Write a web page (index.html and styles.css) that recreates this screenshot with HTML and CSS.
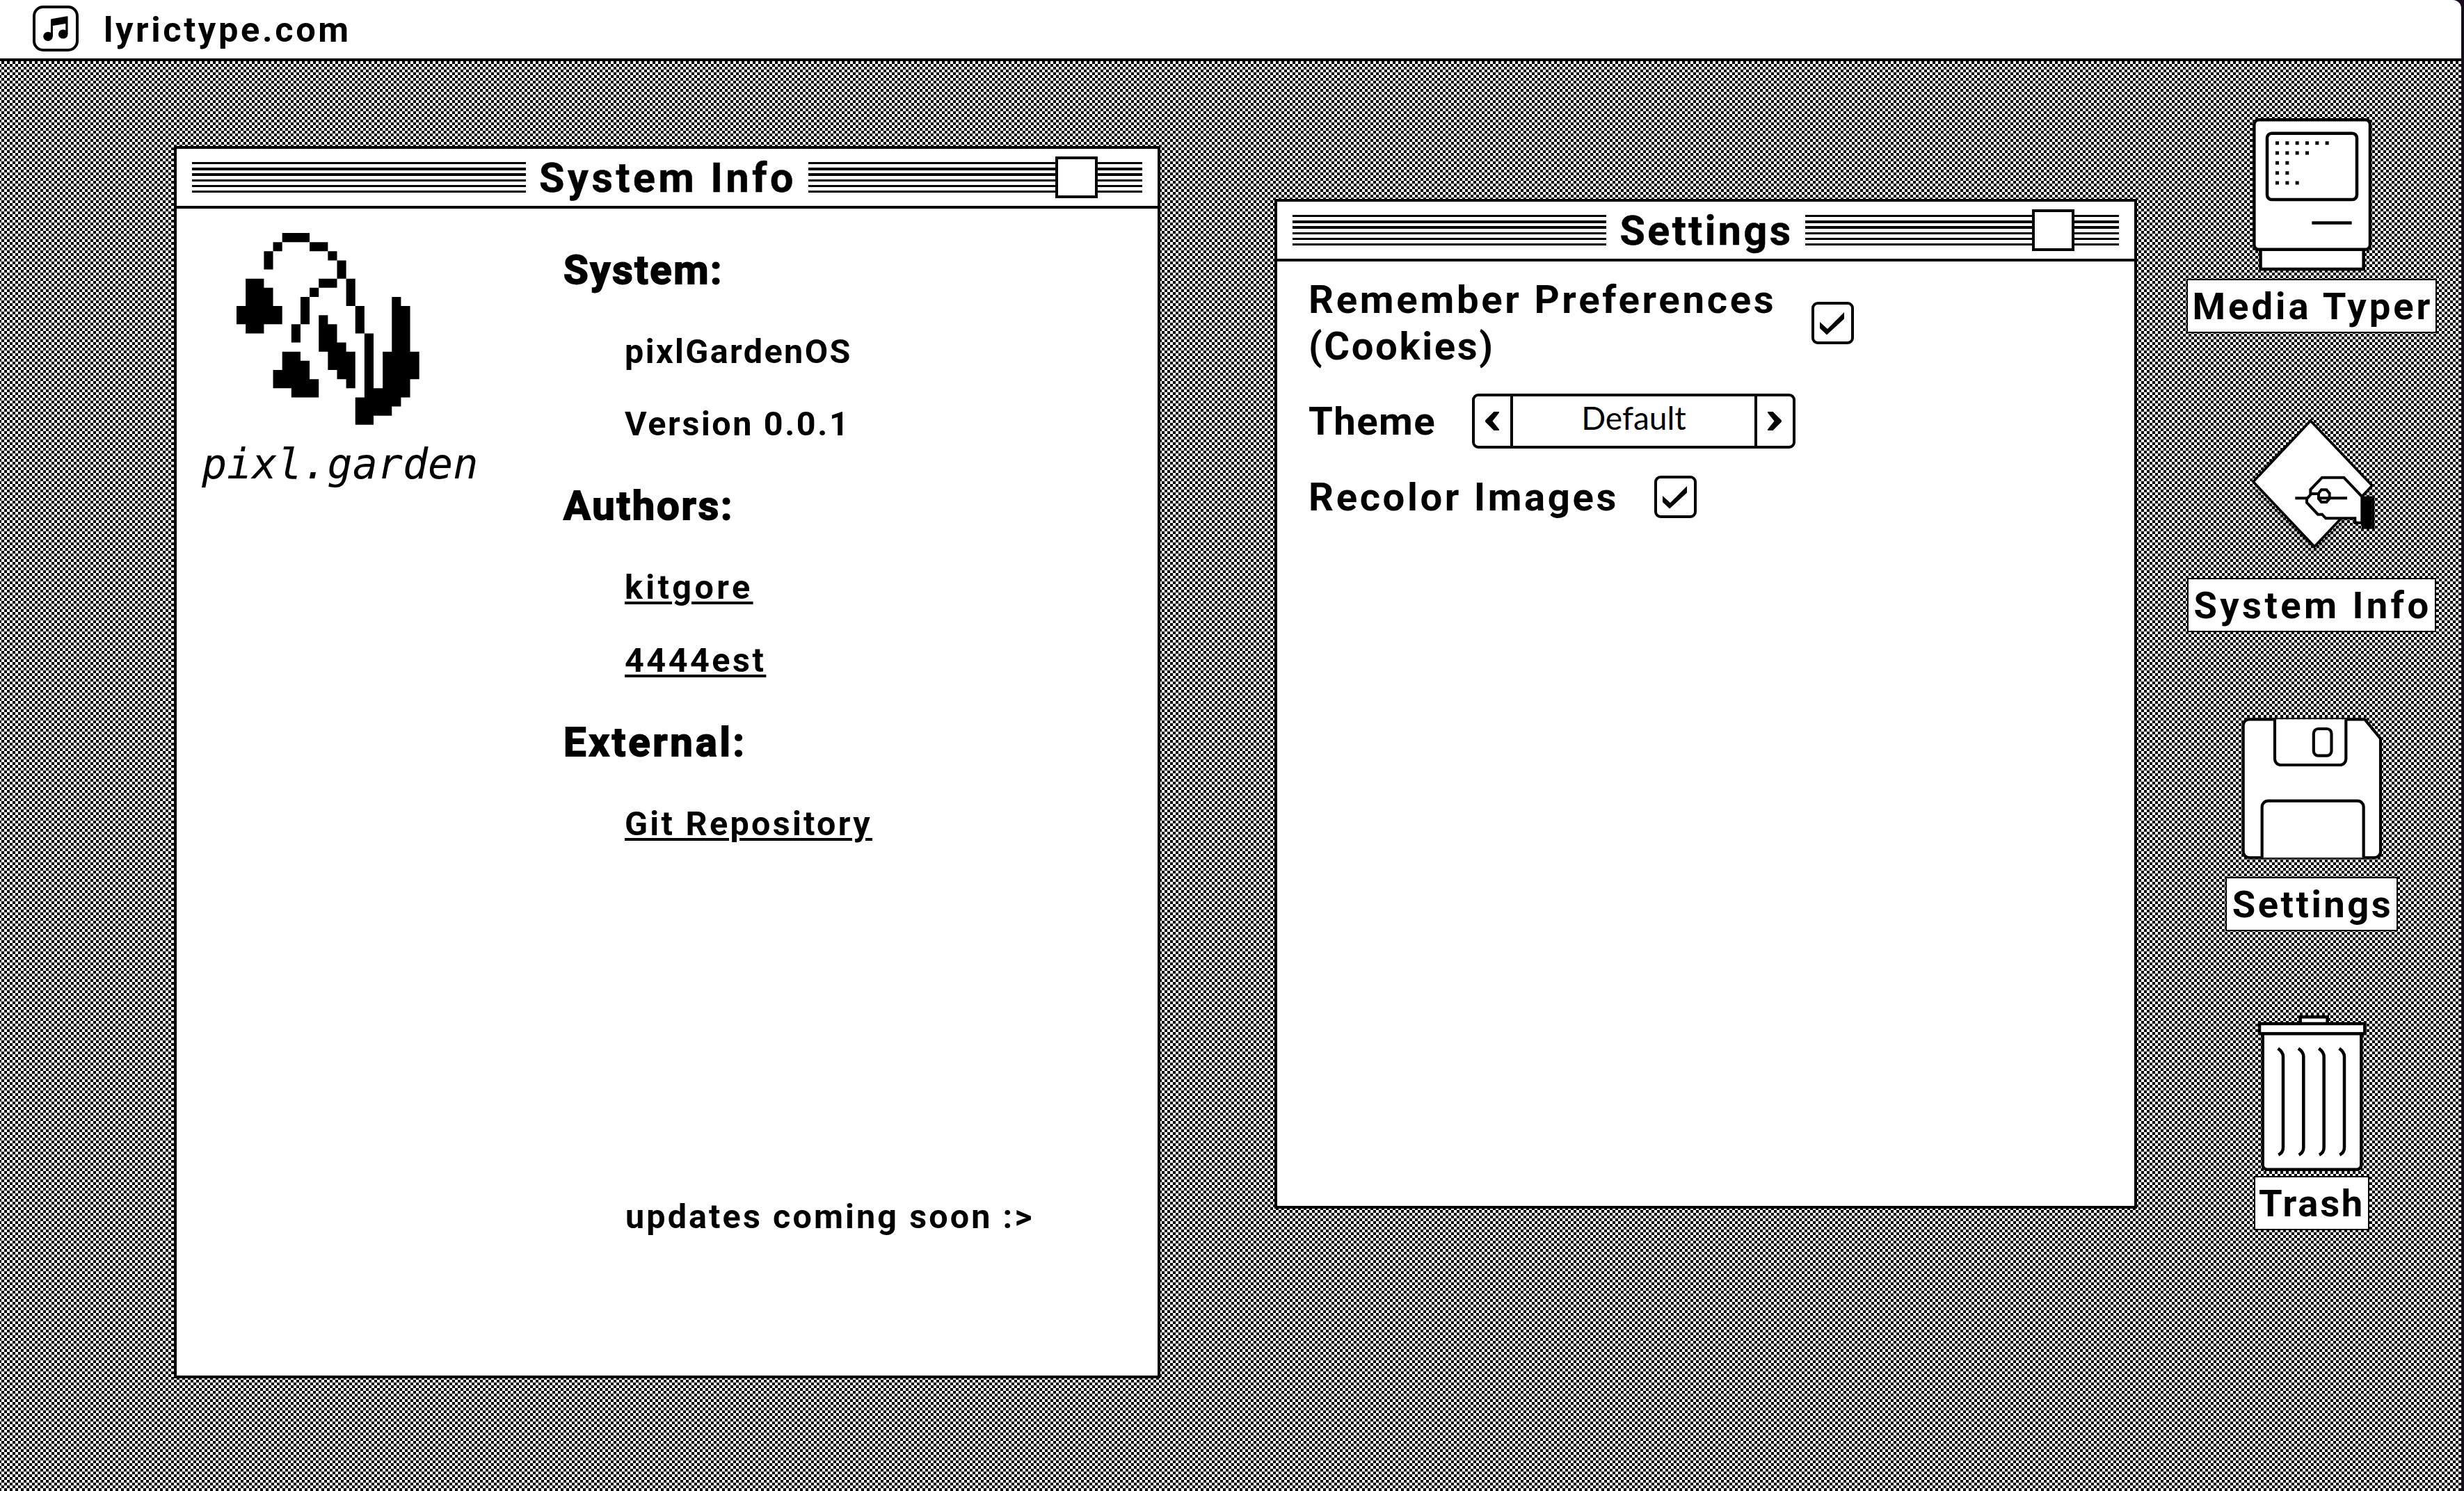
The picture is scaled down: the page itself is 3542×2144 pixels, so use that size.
FILE: index.html
```
<!DOCTYPE html>
<html lang="en">
<head>
<meta charset="utf-8">
<title>lyrictype.com</title>
<link rel="stylesheet" href="styles.css">
</head>
<body>
<div class="screen">
  <header class="menubar">
    <svg class="menubar-icon" viewBox="0 0 66 66">
      <rect x="2" y="2" width="62" height="62" rx="13" fill="none" stroke="#000" stroke-width="4"/>
      <path d="M26 20.500Q26 19.500 27 19.300L49.500 15.200Q50.500 15.200 50.500 16.200V41H47.300V26L29 29V44.500H26Z"/>
      <ellipse cx="22" cy="44.300" rx="6.800" ry="6.600"/>
      <ellipse cx="43.700" cy="41" rx="6.800" ry="6.600"/>
    </svg>
    <span class="menubar-title track-36">lyrictype.com</span>
  </header>

  <main class="desktop">
    <section class="window window-info">
      <div class="titlebar">
        <div class="stripes"></div>
        <h1 class="title track-46">System Info</h1>
        <div class="stripes"></div>
        <button class="close" aria-label="Close"></button>
      </div>
      <div class="info-body">
        <div class="brand">
          <svg class="flower" viewBox="0 0 20 21">
            <path d="M5 0h3v1h-3zM4 1h1v1h-1zM8 1h2v1h-2zM3 2h1v2h-1zM10 2h1v1h-1zM11 3h1v2h-1zM9 5h2v1h-2zM12 5h1v3h-1zM8 6h1v1h-1zM7 7h1v3h-1zM6 10h1v2h-1zM13 8h1v3h-1z"/>
            <path d="M1 5h2v1h1v2h1v2h-2v1h-2v-1h-1v-2h1z"/>
            <path d="M5 13h2v1h1v2h1v2h-3v-1h-2v-2h1z"/>
            <path d="M9 9h1v1h1v2h1v1h1v4h-1v-1h-1v-1h-1v-2h-1z"/>
            <path d="M14 11h1v6h1v-4h1v-6h1v1h1v5h1v3h-1v2h-1v1h-1v1h-2v1h-2v-3h1z"/>
          </svg>
          <div class="wordmark">pixl.garden</div>
        </div>
        <div class="details">
          <h2 class="track-25">System:</h2>
          <ul>
            <li class="track-24">pixlGardenOS</li>
            <li class="track-26">Version 0.0.1</li>
          </ul>
          <h2 class="track-27">Authors:</h2>
          <ul>
            <li><a class="track-44">kitgore</a></li>
            <li><a class="track-35">4444est</a></li>
          </ul>
          <h2 class="track-38">External:</h2>
          <ul>
            <li><a class="track-33">Git Repository</a></li>
          </ul>
          <p class="note track-31">updates coming soon :&gt;</p>
        </div>
      </div>
    </section>

    <section class="window window-settings">
      <div class="titlebar">
        <div class="stripes"></div>
        <h1 class="title track-35">Settings</h1>
        <div class="stripes"></div>
        <button class="close" aria-label="Close"></button>
      </div>
      <div class="settings-body">
        <div class="setting setting-cookies">
          <span class="label"><span class="track-37">Remember Preferences</span><br><span class="track-26">(Cookies)</span></span>
          <span class="checkbox"><svg viewBox="0 0 60 60"><path d="M12 29L23 39L47 15V24.500L22 47.500L12 38Z"/></svg></span>
        </div>
        <div class="setting setting-theme">
          <span class="label track-14">Theme</span>
          <div class="picker">
            <span class="arrow"><svg viewBox="0 0 20 27"><path d="M12.500 0H20V1.500L10.500 13.500L20 25.500V27H12.500L0 14.500V12.500Z"/></svg></span>
            <span class="value">Default</span>
            <span class="arrow"><svg viewBox="0 0 20 27"><path d="M7.500 0H0V1.500L9.500 13.500L0 25.500V27H7.500L20 14.500V12.500Z"/></svg></span>
          </div>
        </div>
        <div class="setting setting-recolor">
          <span class="label track-36">Recolor Images</span>
          <span class="checkbox"><svg viewBox="0 0 60 60"><path d="M12 29L23 39L47 15V24.500L22 47.500L12 38Z"/></svg></span>
        </div>
      </div>
    </section>

    <nav class="icons">
      <div class="icon">
        <svg viewBox="300 45 620 708">
          <g fill="#fff" stroke="#000" stroke-width="13.500">
            <rect x="388.500" y="610" width="444.500" height="101"/>
            <rect x="361" y="66.500" width="500" height="560" rx="20"/>
            <rect x="417" y="125" width="387" height="286" rx="20"/>
            <path d="M610 511.500H782"/>
          </g>
          <path d="M453 167H683M453 210H597M453 253H511M453 296H511M453 339H554" stroke="#000" stroke-width="15" stroke-dasharray="15 28"/>
        </svg>
        <span class="caption caption-media track-40">Media Typer</span>
      </div>
      <div class="icon">
        <svg viewBox="300 45 620 708">
          <path class="paper" d="M604 75L870 355L621 618L357 338Z" fill="#fff" stroke="#000" stroke-width="11"/>
          <path d="M538 409H600" stroke="#000" stroke-width="12"/>
          <path d="M604 392V372L654 320H748L826 402V515H796V496H670L654 479H636L588 428V412L608 390H640" fill="#fff" stroke="#000" stroke-width="12"/>
          <path d="M651 373H673L686 388V411L673 426H651L639 411V388ZM638 409H762" fill="none" stroke="#000" stroke-width="12"/>
          <rect x="824" y="401" width="56" height="141"/>
        </svg>
        <span class="caption caption-info track-44">System Info</span>
      </div>
      <div class="icon">
        <svg viewBox="300 45 620 708">
          <g fill="#fff" stroke="#000" stroke-width="12.500">
            <path d="M340 73H838L906 156V644A26 26 0 0 1 880 670H340A26 26 0 0 1 314 644V99A26 26 0 0 1 340 73Z"/>
            <path d="M450 73V244A26 26 0 0 0 476 270H731A26 26 0 0 0 757 244V73"/>
            <rect x="617.500" y="114" width="77" height="116" rx="20"/>
            <path d="M395 670V451A26 26 0 0 1 421 425H807A26 26 0 0 1 833 451V670"/>
          </g>
        </svg>
        <span class="caption caption-settings track-35">Settings</span>
      </div>
      <div class="icon">
        <svg viewBox="300 45 620 708">
          <g fill="#fff" stroke="#000" stroke-width="13.500">
            <rect x="560" y="67" width="117" height="30"/>
            <path d="M398 139V705A20 20 0 0 0 418 725.500H803A20 20 0 0 0 823 705V139"/>
            <rect x="384" y="96" width="454" height="43"/>
            <g fill="none">
              <path d="M464 203Q486 219 486 238V630Q486 652 466 662"/>
              <path d="M552 203Q574 219 574 238V630Q574 652 554 662"/>
              <path d="M640 203Q662 219 662 238V630Q662 652 642 662"/>
              <path d="M728 203Q750 219 750 238V630Q750 652 730 662"/>
            </g>
          </g>
        </svg>
        <span class="caption caption-trash track-27">Trash</span>
      </div>
    </nav>
  </main>
</div>
</body>
</html>
```
FILE: styles.css
```
* { box-sizing: border-box; margin: 0; padding: 0; }

body {
  width: 3542px;
  height: 2144px;
  overflow: hidden;
  background: #160a1c;
  color: #000;
  font-family: Roboto, "Liberation Sans", sans-serif;
  font-weight: 700;
}

svg { display: block; }

.screen {
  display: flex;
  flex-direction: column;
  width: 3538px;
  height: 2144px;
  border-top-right-radius: 12px;
  overflow: hidden;
}

/* Menu bar */
.menubar {
  display: flex;
  align-items: center;
  gap: 36px;
  height: 88px;
  padding: 0 47px 2px;
  border-bottom: 4px solid #000;
  background: #fff;
}
.menubar-icon { width: 66px; height: 66px; }
.menubar-title { padding-top: 3px; font-size: 50.6px; line-height: 60px; }

/* Dithered desktop */
.desktop {
  position: relative;
  flex: 1;
  background: conic-gradient(#fff 25%, #000 0 50%, #fff 0 75%, #000 0) 2px 0 / 8px 8px;
}

/* Windows */
.window {
  position: absolute;
  display: flex;
  flex-direction: column;
  border: 4px solid #000;
  background: #fff;
}
.window-info { left: 250px; top: 122px; width: 1418px; height: 1772px; }
.window-settings { left: 1832px; top: 198px; width: 1240px; height: 1452px; }

.titlebar {
  position: relative;
  display: flex;
  align-items: center;
  height: 86px;
  padding: 0 22px;
  border-bottom: 4px solid #000;
}
.title {
  padding: 2px 17px 0 19px;
  font-size: 59.1px;
  line-height: 70px;
  font-weight: 700;
  -webkit-text-stroke: .6px #000;
}
.stripes {
  flex: 1;
  height: 44.4px;
  background: repeating-linear-gradient(#000 0 3.4px, #fff 3.4px 8.2px);
}
.close {
  position: absolute;
  right: 86px;
  top: 11px;
  width: 61px;
  height: 60px;
  border: 4px solid #000;
  background: #fff;
}

/* System Info */
.info-body { display: flex; flex: 1; }
.brand { width: 556px; padding: 35px 0 0 36px; }
.flower { width: 262.7px; height: 275.8px; margin-left: 50px; }
.wordmark {
  margin-top: 26px;
  font: italic 400 60px/60px "DejaVu Sans Mono", monospace;
}
.details { padding-top: 57.500px; }
.details h2 {
  font-size: 58px;
  line-height: 60px;
  -webkit-text-stroke: 1.8px #000;
}
.details ul {
  display: flex;
  flex-direction: column;
  gap: 48.700px;
  padding: 60px 0 59px 88px;
  list-style: none;
}
.details li, .note { font-size: 48.5px; line-height: 56px; }
.details a {
  text-decoration: underline;
  text-decoration-thickness: 4px;
  text-underline-offset: 4px;
}
.note { padding: 450px 0 0 89px; }

/* Settings */
.settings-body { display: flex; flex-direction: column; gap: 34px; padding: 20px 45px; }
.setting { display: flex; align-items: center; gap: 51px; }
.setting-cookies { height: 136px; }
.setting-theme { height: 79px; gap: 52px; }
.setting-recolor { height: 71px; }
.label { padding-top: 2px; font-size: 56.3px; line-height: 67px; }
.checkbox {
  display: flex;
  width: 61px;
  height: 61px;
  border: 4px solid #000;
  border-radius: 9px;
}
.checkbox svg { width: 60px; height: 60px; margin: -4px; }
.picker {
  display: flex;
  width: 465px;
  height: 79px;
  border: 4px solid #000;
  border-radius: 9px;
}
.arrow { display: flex; flex: 0 0 51px; align-items: center; justify-content: center; }
.arrow svg { width: 20px; height: 27px; }
.value {
  flex: 1;
  padding-bottom: 10px;
  border: solid #000;
  border-width: 0 4px;
  font: 400 46px/61px Lato, sans-serif;
  text-align: center;
}

/* Desktop icons */
.icons {
  position: absolute;
  left: 3143px;
  top: 77px;
  display: flex;
  flex-direction: column;
  gap: 116px;
  width: 360px;
}
.icon { display: flex; flex-direction: column; align-items: center; }
.icon svg { width: 206.670px; height: 236px; }
.paper { filter: drop-shadow(0 34px 14px rgba(0, 0, 0, .25)); }
.caption {
  height: 78px;
  padding: 0 0 0 3px;
  border: 2px solid #000;
  background: #fff;
  font-size: 54.4px;
  line-height: 75px;
  text-align: center;
  white-space: nowrap;
}
.caption-media { width: 360px; }
.caption-info { width: 358px; }
.caption-settings { width: 248px; }
.caption-trash { width: 166px; padding-left: 0; }

/* Letter tracking, in tenths of a pixel */
.track-14 { letter-spacing: 1.4px; }
.track-24 { letter-spacing: 2.4px; }
.track-25 { letter-spacing: 2.5px; }
.track-26 { letter-spacing: 2.6px; }
.track-27 { letter-spacing: 2.7px; }
.track-31 { letter-spacing: 3.1px; }
.track-33 { letter-spacing: 3.3px; }
.track-35 { letter-spacing: 3.5px; }
.track-36 { letter-spacing: 3.6px; }
.track-37 { letter-spacing: 3.7px; }
.track-38 { letter-spacing: 3.8px; }
.track-40 { letter-spacing: 4px; }
.track-44 { letter-spacing: 4.4px; }
.track-46 { letter-spacing: 4.6px; }
```
